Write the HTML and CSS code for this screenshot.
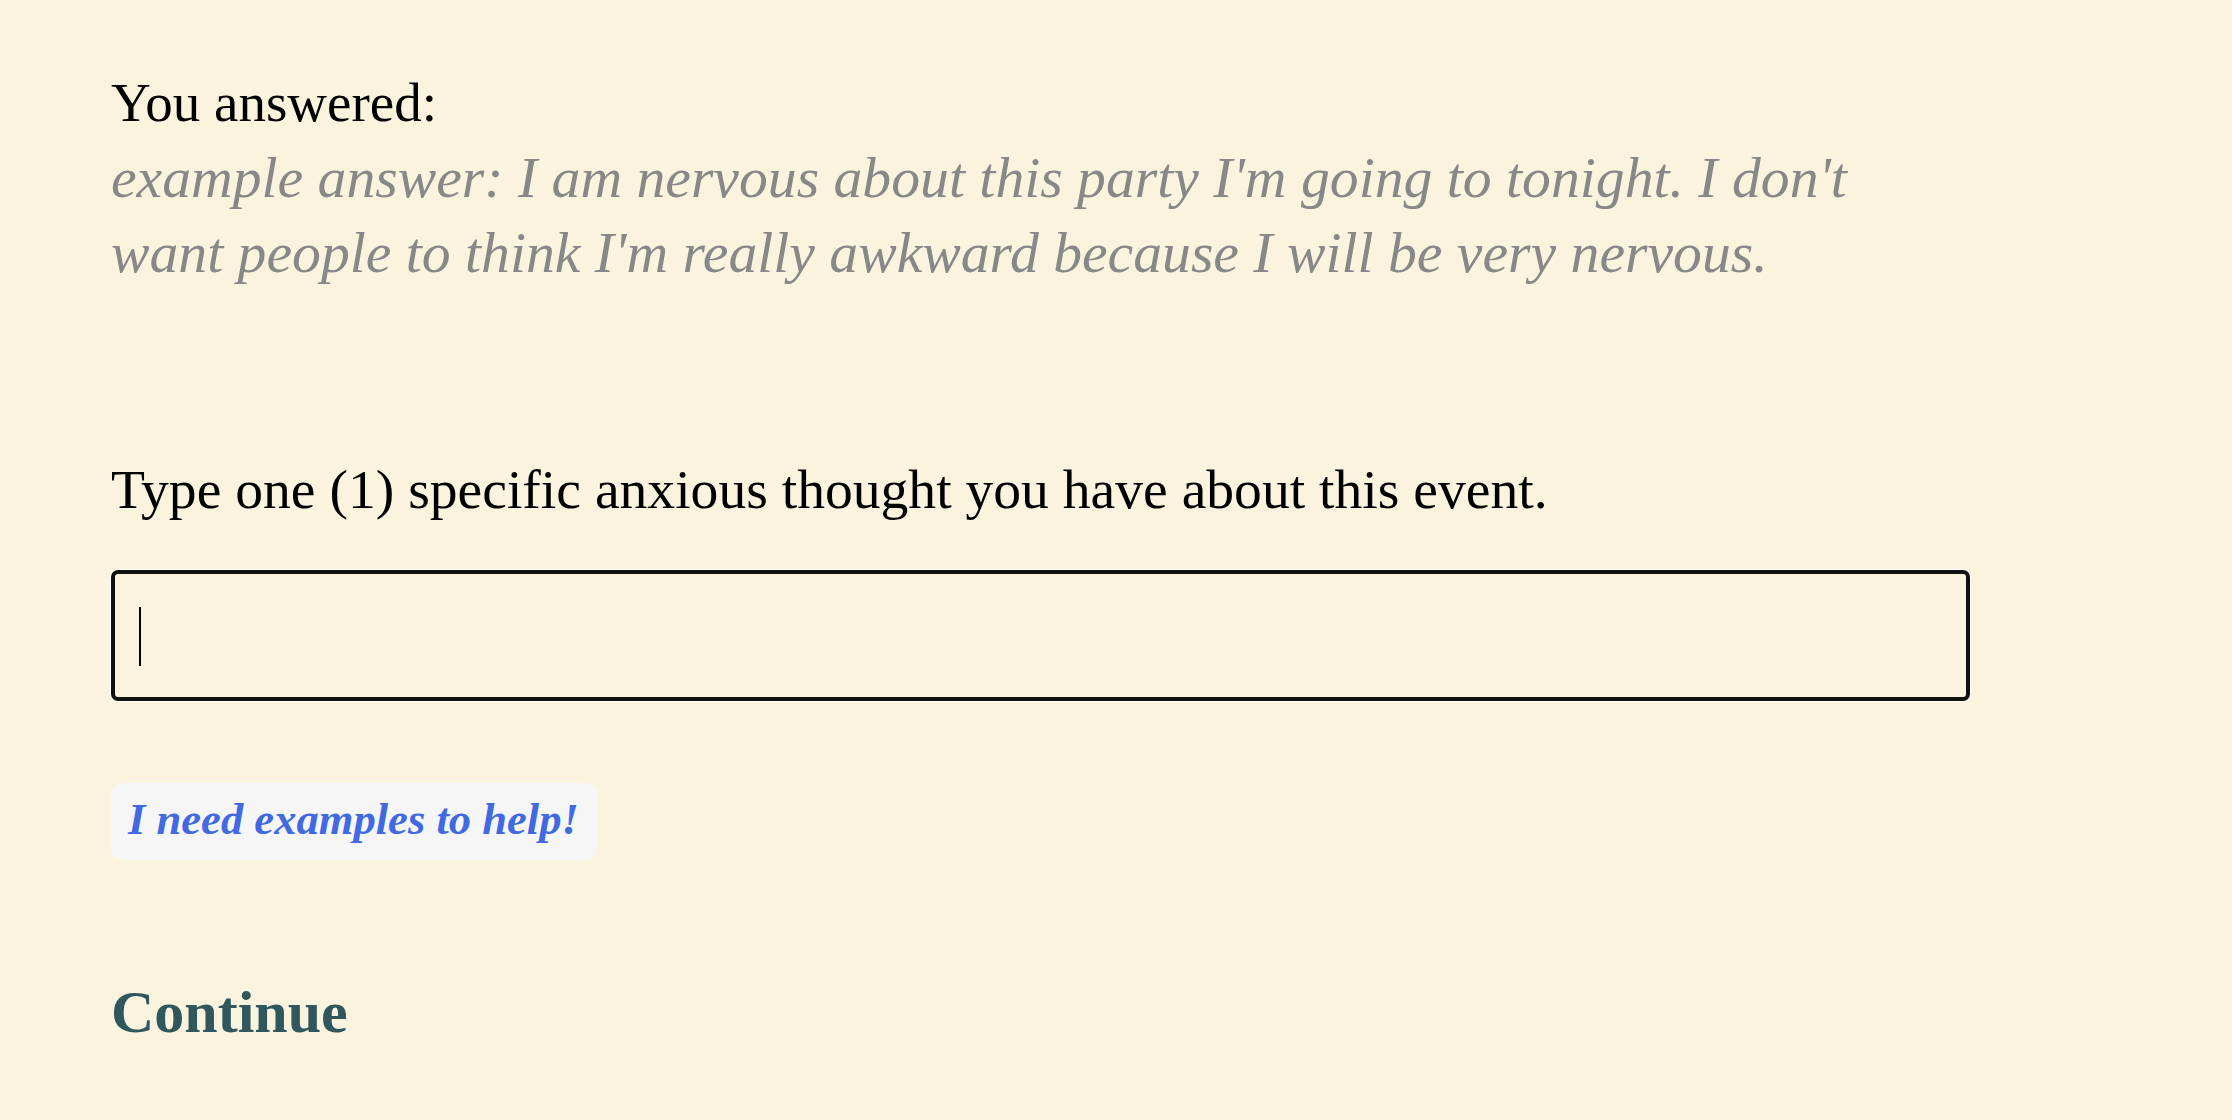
FILE: index.html
```html
<!DOCTYPE html>
<html lang="en">
<head>
<meta charset="utf-8">
<title>Anxious thought</title>
<link rel="stylesheet" href="styles.css">
</head>
<body>
<main class="page">
  <section class="answer">
    <p class="answer-label">You answered:</p>
    <p class="answer-text">example answer: I am nervous about this party I'm going to tonight. I don't want people to think I'm really awkward because I will be very nervous.</p>
  </section>
  <section class="question">
    <label class="question-label" for="thought">Type one (1) specific anxious thought you have about this event.</label>
    <div class="field">
      <input id="thought" class="field-input" type="text">
      <span class="caret"></span>
    </div>
    <button class="help-btn" type="button">I need examples to help!</button>
  </section>
  <button class="continue-btn" type="button">Continue</button>
</main>
</body>
</html>
```
FILE: styles.css
```css
html, body {
  margin: 0;
  padding: 0;
  background: #faf3de;
}
body {
  font-family: "Liberation Serif", "Times New Roman", serif;
  color: #000;
}
.page {
  display: flex;
  flex-direction: column;
  align-items: flex-start;
  padding: 65px 0 0 111px;
}
.answer {
  width: 1790px;
}
.answer-label {
  margin: 0;
  font-size: 55px;
  line-height: 75px;
}
.answer-text {
  margin: 0;
  font-size: 57.7px;
  line-height: 75px;
  font-style: italic;
  color: #888888;
}
.question {
  margin-top: 162px;
  display: flex;
  flex-direction: column;
  align-items: flex-start;
}
.question-label {
  font-size: 55.6px;
  line-height: 75px;
}
.field {
  position: relative;
  margin-top: 43px;
  width: 1860px;
}
.field-input {
  box-sizing: border-box;
  display: block;
  width: 1859px;
  height: 131px;
  margin: 0;
  padding: 0 24px;
  border: 4.5px solid #111111;
  border-radius: 7px;
  background: transparent;
  font-family: "Liberation Serif", serif;
  font-size: 52px;
  outline: none;
  box-shadow: 0 0 0 1px #ffffff;
}
.caret {
  position: absolute;
  left: 28px;
  top: 37px;
  width: 1.5px;
  height: 59px;
  background: #000;
}
.help-btn {
  margin-top: 82px;
  padding: 0 18px 5px 17px;
  height: 77px;
  border: none;
  border-radius: 14px / 9px;
  background: #f6f6f6;
  color: #4169e1;
  font-family: "Liberation Serif", serif;
  font-weight: 700;
  font-style: italic;
  font-size: 44.6px;
  line-height: 72px;
  cursor: pointer;
}
.continue-btn {
  margin-top: 115px;
  padding: 0;
  border: none;
  background: none;
  color: #2f575d;
  font-family: "Liberation Serif", serif;
  font-weight: 700;
  font-size: 60px;
  line-height: 75px;
  cursor: pointer;
}
```
